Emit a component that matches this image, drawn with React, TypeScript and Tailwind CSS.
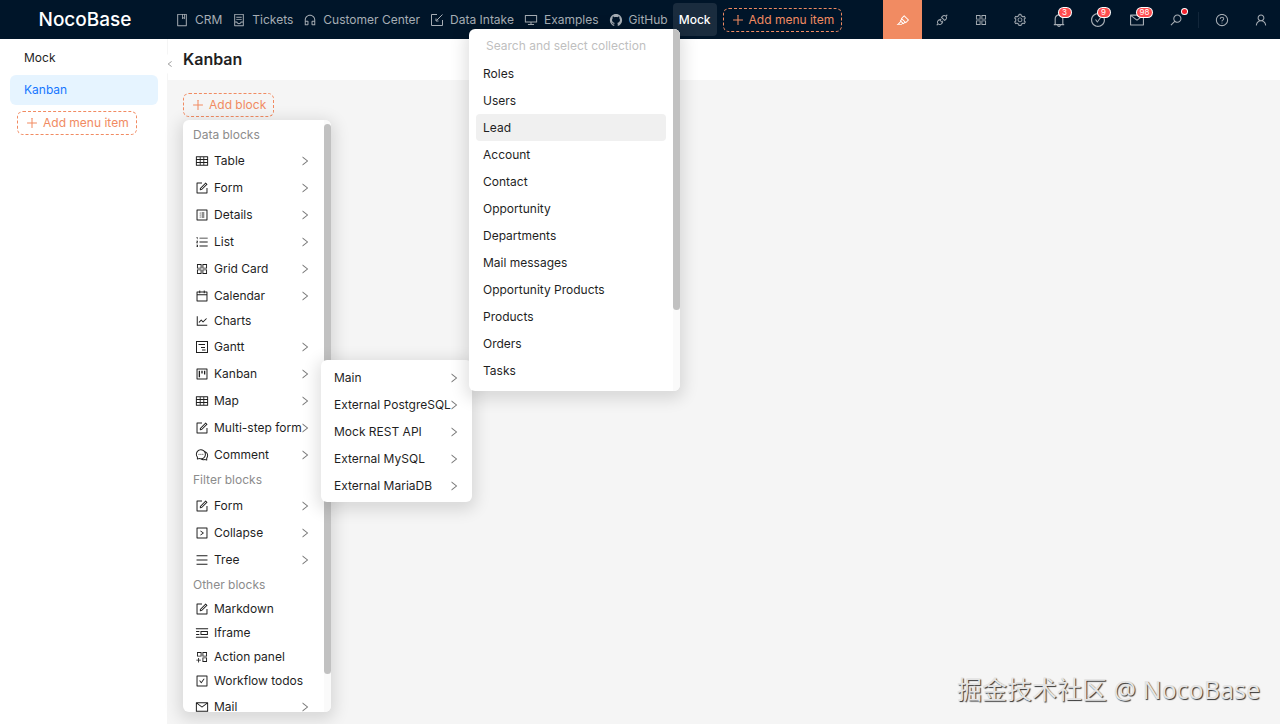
import React from 'react';
import type { IconType } from 'react-icons';
import {
  AiOutlineApi,
  AiOutlineAppstore,
  AiOutlineAppstoreAdd,
  AiOutlineBell,
  AiOutlineBook,
  AiOutlineCalendar,
  AiOutlineCheckCircle,
  AiOutlineCheckSquare,
  AiOutlineComment,
  AiOutlineContainer,
  AiOutlineCustomerService,
  AiOutlineDesktop,
  AiOutlineForm,
  AiOutlineGithub,
  AiOutlineHighlight,
  AiOutlineLeft,
  AiOutlineLineChart,
  AiOutlineMail,
  AiOutlineMenu,
  AiOutlineOrderedList,
  AiOutlinePicRight,
  AiOutlinePlus,
  AiOutlineProfile,
  AiOutlineProject,
  AiOutlineQuestionCircle,
  AiOutlineRight,
  AiOutlineRightSquare,
  AiOutlineSearch,
  AiOutlineSetting,
  AiOutlineTable,
  AiOutlineUser,
} from 'react-icons/ai';

interface NavItem {
  label: string;
  icon: IconType;
}

interface ActionItem {
  name: string;
  icon: IconType;
  badge?: string;
  dot?: boolean;
  active?: boolean;
  flip?: boolean;
}

interface BlockItem {
  label: string;
  icon: IconType;
  sub?: boolean;
}

interface BlockGroup {
  title: string;
  items: BlockItem[];
}

// The gantt block has no matching icon in the ant set
const GanttIcon: IconType = ({ className }) => (
  <svg className={className} width="1em" height="1em" viewBox="0 0 14 14" fill="none" stroke="currentColor">
    <rect x="1.5" y="1.5" width="11" height="11" />
    <path d="M3.5 4.5h6.5M6 7.5h4M7 10h3.5" />
  </svg>
);

// Intake form: open box with a plain slanted stroke
const IntakeIcon: IconType = ({ className }) => (
  <svg className={className} width="1em" height="1em" viewBox="0 0 14 14" fill="none" stroke="currentColor">
    <path d="M7 1.5H1.5v11h11V7M12.5 1.5l-6 6M6 5.5V8h2.5" />
  </svg>
);

const navItems: NavItem[] = [
  { label: 'CRM', icon: AiOutlineBook },
  { label: 'Tickets', icon: AiOutlineContainer },
  { label: 'Customer Center', icon: AiOutlineCustomerService },
  { label: 'Data Intake', icon: IntakeIcon },
  { label: 'Examples', icon: AiOutlineDesktop },
  { label: 'GitHub', icon: AiOutlineGithub },
];

const actions: ActionItem[] = [
  { name: 'UI editor', icon: AiOutlineHighlight, active: true },
  { name: 'Plugins', icon: AiOutlineApi },
  { name: 'Blocks', icon: AiOutlineAppstore },
  { name: 'Settings', icon: AiOutlineSetting },
  { name: 'Notifications', icon: AiOutlineBell, badge: '3' },
  { name: 'Todos', icon: AiOutlineCheckCircle, badge: '9' },
  { name: 'Mail', icon: AiOutlineMail, badge: '98' },
  { name: 'Search', icon: AiOutlineSearch, dot: true, flip: true },
];

const blockGroups: BlockGroup[] = [
  {
    title: 'Data blocks',
    items: [
      { label: 'Table', icon: AiOutlineTable, sub: true },
      { label: 'Form', icon: AiOutlineForm, sub: true },
      { label: 'Details', icon: AiOutlineProfile, sub: true },
      { label: 'List', icon: AiOutlineOrderedList, sub: true },
      { label: 'Grid Card', icon: AiOutlineAppstore, sub: true },
      { label: 'Calendar', icon: AiOutlineCalendar, sub: true },
      { label: 'Charts', icon: AiOutlineLineChart },
      { label: 'Gantt', icon: GanttIcon, sub: true },
      { label: 'Kanban', icon: AiOutlineProject, sub: true },
      { label: 'Map', icon: AiOutlineTable, sub: true },
      { label: 'Multi-step form', icon: AiOutlineForm, sub: true },
      { label: 'Comment', icon: AiOutlineComment, sub: true },
    ],
  },
  {
    title: 'Filter blocks',
    items: [
      { label: 'Form', icon: AiOutlineForm, sub: true },
      { label: 'Collapse', icon: AiOutlineRightSquare, sub: true },
      { label: 'Tree', icon: AiOutlineMenu, sub: true },
    ],
  },
  {
    title: 'Other blocks',
    items: [
      { label: 'Markdown', icon: AiOutlineForm },
      { label: 'Iframe', icon: AiOutlinePicRight },
      { label: 'Action panel', icon: AiOutlineAppstoreAdd },
      { label: 'Workflow todos', icon: AiOutlineCheckSquare },
      { label: 'Mail', icon: AiOutlineMail, sub: true },
    ],
  },
];

const dataSources = ['Main', 'External PostgreSQL', 'Mock REST API', 'External MySQL', 'External MariaDB'];

const collections = [
  'Roles',
  'Users',
  'Lead',
  'Account',
  'Contact',
  'Opportunity',
  'Departments',
  'Mail messages',
  'Opportunity Products',
  'Products',
  'Orders',
  'Tasks',
];

function AddButton({ label }: { label: string }) {
  return (
    <button className="flex h-6 shrink-0 items-center gap-1 rounded-md border border-dashed border-[#f18b62] px-[7px] whitespace-nowrap text-[#f18b62]">
      <AiOutlinePlus className="size-[14px]" />
      {label}
    </button>
  );
}

function Header() {
  return (
    <header className="flex h-[39px] items-center bg-[#001529] text-[#a6adb4]">
      <div className="w-[170px] shrink-0 text-center text-[19px] leading-7 font-medium text-white">NocoBase</div>
      <nav className="flex items-center">
        {navItems.map(({ label, icon: Icon }) => (
          <a key={label} href="#" className="flex items-center gap-[6px] px-[5px] whitespace-nowrap">
            <Icon className="size-[14px]" />
            {label}
          </a>
        ))}
        <a href="#" className="flex h-[33px] items-center rounded-sm bg-[#1a2c3e] px-[6px] font-medium text-white">
          Mock
        </a>
        <div className="ml-[6px]">
          <AddButton label="Add menu item" />
        </div>
      </nav>

      <div className="ml-auto flex items-center">
        {actions.map(({ name, icon: Icon, badge, dot, active, flip }) => (
          <button
            key={name}
            aria-label={name}
            className={`flex h-[39px] w-[39px] items-center justify-center ${active ? 'bg-[#f18b62] text-white' : ''}`}
          >
            <span className="relative">
              <Icon className={`${badge ? 'size-4' : 'size-[14px]'} ${flip ? '-scale-x-100' : ''}`} />
              {badge && (
                <span className="absolute -top-1 left-2 flex h-[9px] min-w-[12px] items-center justify-center rounded-full bg-[#ff4d4f] px-[3px] text-[8px] text-white ring-1 ring-white">
                  {badge}
                </span>
              )}
              {dot && <span className="absolute -top-1 -right-1 size-[5px] rounded-full bg-[#f5222d] ring-1 ring-white" />}
            </span>
          </button>
        ))}
        <span className="mr-[3px] ml-[3px] h-4 w-px bg-[#12263a]" />
        <button aria-label="Help" className="flex h-[39px] w-[39px] items-center justify-center">
          <AiOutlineQuestionCircle className="size-[14px]" />
        </button>
        <button aria-label="User" className="flex h-[39px] w-[39px] items-center justify-center">
          <AiOutlineUser className="size-[14px]" />
        </button>
      </div>
    </header>
  );
}

function Sidebar() {
  return (
    <aside className="w-[168px] shrink-0 border-r border-[#f5f5f5] bg-white pt-1 pr-[9px] pl-[10px]">
      <a href="#" className="flex h-[29px] items-center px-[14px]">
        Mock
      </a>
      <a href="#" className="mt-[3px] flex h-[30px] items-center rounded-md bg-[#e6f4ff] px-[14px] text-[#1677ff]">
        Kanban
      </a>
      <div className="mt-[6px] flex px-[7px]">
        <AddButton label="Add menu item" />
      </div>
    </aside>
  );
}

function BlockMenu() {
  return (
    <div className="absolute top-[120px] bottom-3 left-[183px] flex w-[148px] overflow-hidden rounded-md bg-white shadow-[0_4px_16px_4px_rgba(0,0,0,0.12)]">
      <div className="flex-1 overflow-hidden pt-[3px]">
        {blockGroups.map((group) => (
          <section key={group.title}>
            <h2 className="flex h-6 items-center px-[10px] text-[#8c8c8c]">{group.title}</h2>
            {group.items.map(({ label, icon: Icon, sub }) => (
              <button
                key={label}
                className={`flex w-full items-center gap-[5px] pl-3 whitespace-nowrap ${sub ? 'h-[27px]' : 'h-6'}`}
              >
                <Icon className="size-[14px] shrink-0" />
                <span className="w-20 text-left">{label}</span>
                {sub && <AiOutlineRight className="size-3 shrink-0 text-[#7a7a7a]" />}
              </button>
            ))}
          </section>
        ))}
      </div>
      <div className="w-[7px] bg-[#fafafa] pt-1">
        <div className="h-[550px] rounded-full bg-[#c1c1c1]" />
      </div>
    </div>
  );
}

function DataSourceMenu() {
  return (
    <div className="absolute top-[360px] left-[321px] w-[151px] rounded-md bg-white pt-1 pb-[3px] shadow-[0_4px_16px_4px_rgba(0,0,0,0.12)]">
      {dataSources.map((name) => (
        <button key={name} className="flex h-[27px] w-full items-center pl-[13px] whitespace-nowrap">
          <span className="w-[114px] text-left">{name}</span>
          <AiOutlineRight className="size-3 shrink-0 text-[#7a7a7a]" />
        </button>
      ))}
    </div>
  );
}

function CollectionMenu() {
  return (
    <div className="absolute top-[29px] left-[469px] flex h-[362px] w-[211px] overflow-hidden rounded-md bg-white shadow-[0_4px_16px_4px_rgba(0,0,0,0.12)]">
      <div className="flex-1 px-[7px] pt-1">
        <input
          aria-label="Search and select collection"
          placeholder="Search and select collection"
          className="mb-[2px] block h-[25px] w-full px-[10px] outline-none placeholder:text-[#bfbfbf]"
        />
        {collections.map((name) => (
          <button
            key={name}
            className={`flex h-[27px] w-full items-center rounded-sm px-[7px] ${name === 'Lead' ? 'bg-[#f0f0f0]' : ''}`}
          >
            {name}
          </button>
        ))}
      </div>
      <div className="w-[7px] bg-[#fafafa]">
        <div className="h-[281px] rounded-b-full bg-[#c1c1c1]" />
      </div>
    </div>
  );
}

export default function App() {
  return (
    <div className="relative flex min-h-screen flex-col bg-[#f5f5f5] font-[Inter,sans-serif] text-xs leading-5 text-[#1f1f1f]">
      <Header />
      <div className="flex flex-1">
        <Sidebar />
        <main className="flex-1">
          <div className="flex h-[41px] items-center bg-white px-[15px] pb-[2px]">
            <h1 className="text-base font-semibold">Kanban</h1>
          </div>
          <div className="flex px-[15px] pt-[13px]">
            <AddButton label="Add block" />
          </div>
        </main>
      </div>

      <button
        aria-label="Collapse sidebar"
        className="absolute top-[54px] left-[160px] flex size-5 items-center justify-center rounded-full bg-white text-[#8c8c8c]"
      >
        <AiOutlineLeft className="size-2" />
      </button>

      <BlockMenu />
      <DataSourceMenu />
      <CollectionMenu />

      <div className="absolute right-5 bottom-[17px] font-['Noto_Sans','Noto_Sans_CJK_SC',sans-serif] text-[25px] leading-9 text-[#e4e4e4] [text-shadow:1px_1px_1px_#333]">
        掘金技术社区 @ NocoBase
      </div>
    </div>
  );
}
